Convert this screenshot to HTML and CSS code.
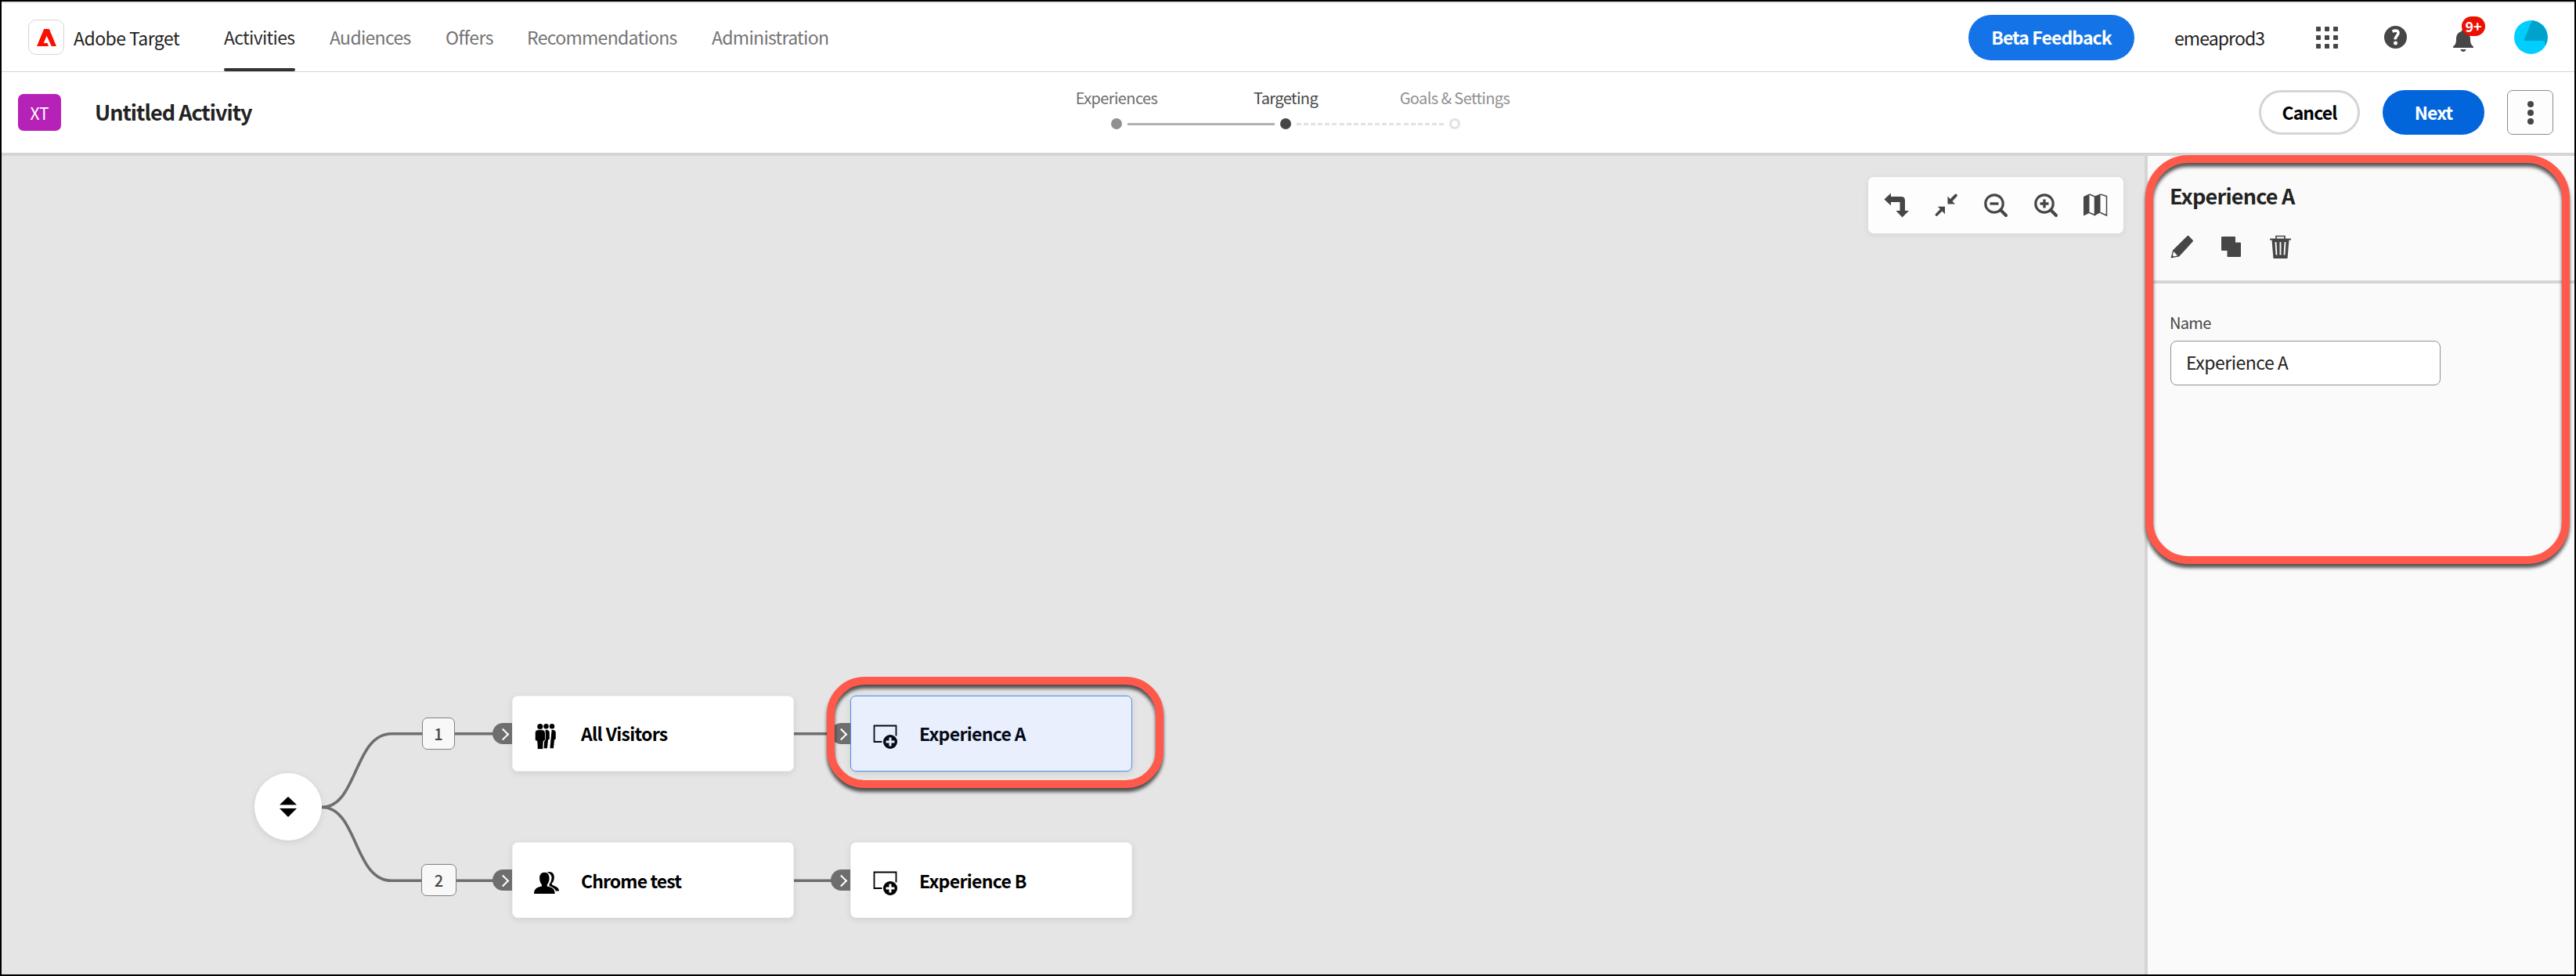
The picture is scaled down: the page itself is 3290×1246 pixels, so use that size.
FILE: index.html
```html
<!DOCTYPE html>
<html lang="en">
<head>
<meta charset="utf-8">
<title>Adobe Target</title>
<link rel="stylesheet" href="styles.css">
</head>
<body>
<div class="app">
  <header class="topbar">
    <div class="logo">
      <svg width="25" height="22" viewBox="0 0 25 22"><path fill="#fa0f00" d="M9.200 0h6.600L25 22h-6.200L12.600 8.800 8.800 18h4.600l1.700 4H0z"/></svg>
    </div>
    <span class="t product">Adobe Target</span>
    <nav class="nav">
      <a class="t nav-item active n1">Activities</a>
      <a class="t nav-item n2">Audiences</a>
      <a class="t nav-item n3">Offers</a>
      <a class="t nav-item n4">Recommendations</a>
      <a class="t nav-item n5">Administration</a>
    </nav>
    <div class="top-actions">
      <button class="btn feedback"><span class="t">Beta Feedback</span></button>
      <span class="t org">emeaprod3</span>
      <svg class="apps" width="28" height="28" viewBox="0 0 28 28" fill="#464646"><rect width="6" height="6" rx="1"/><rect x="11" width="6" height="6" rx="1"/><rect x="22" width="6" height="6" rx="1"/><rect y="11" width="6" height="6" rx="1"/><rect x="11" y="11" width="6" height="6" rx="1"/><rect x="22" y="11" width="6" height="6" rx="1"/><rect y="22" width="6" height="6" rx="1"/><rect x="11" y="22" width="6" height="6" rx="1"/><rect x="22" y="22" width="6" height="6" rx="1"/></svg>
      <svg class="help" width="29" height="29" viewBox="0 0 29 29"><circle cx="14.500" cy="14.500" r="14.500" fill="#464646"/><path d="M10.500 7Q18 4.500 18 9.300c0 3-4 4-3.800 8" fill="none" stroke="#fff" stroke-width="3.600"/><circle cx="14.500" cy="22" r="2.500" fill="#fff"/></svg>
      <div class="bell">
        <svg width="26" height="28" viewBox="0 0 26 28" fill="#464646"><path d="M13 0c1.500 0 2.500 1 2.500 2.300C20 3.500 22 7 22 12c0 5 1 7 4 9.500V23H0v-1.500C3 19 4 17 4 12c0-5 2-8.500 6.500-9.700C10.500 1 11.500 0 13 0zM9.500 25h7c-.6 4-6.400 4-7 0z"/></svg>
        <span class="t badge">9+</span>
      </div>
      <svg class="avatar" width="43" height="43" viewBox="0 0 43 43"><circle cx="21.500" cy="21.500" r="21.500" fill="#00ceff"/><path fill="#00a2cc" d="M23 0.100A21.500 21.500 0 0 1 39.800 32Q39.500 26.200 37 26H12z"/></svg>
    </div>
  </header>

  <div class="subbar">
    <div class="type-badge"><span class="t">XT</span></div>
    <h1 class="t title">Untitled Activity</h1>
    <ol class="steps">
      <li class="step done"><span class="t s1">Experiences</span><i class="dot"></i></li>
      <li class="step current"><span class="t s2">Targeting</span><i class="dot"></i></li>
      <li class="step todo"><span class="t s3">Goals &amp; Settings</span><i class="dot"></i></li>
    </ol>
    <div class="sub-actions">
      <button class="btn cancel"><span class="t">Cancel</span></button>
      <button class="btn next"><span class="t">Next</span></button>
      <button class="more"><i></i><i></i><i></i></button>
    </div>
  </div>

  <div class="body">
    <main class="canvas">
      <div class="toolbar">
        <svg width="32" height="32" viewBox="0 0 32 32" fill="#464646"><path d="M0.500 8.500L9 0.500V5H22q5 0 5 5v13h5l-8.500 8.500L15.500 23h5V12H9v4.500z"/></svg>
        <svg width="32" height="32" viewBox="0 0 32 32" fill="#464646"><path d="M17.500 4.500V14.500H27L23.500 11l6-6.500q.8-1.800-.7-2.800-1-.6-2 .2L20.800 8z"/><path d="M14 27.500V17.800H4.800L8 21l-6 6q-1 1.500.2 2.500 1.200.8 2.200 0L10.500 23.500z"/></svg>
        <svg width="32" height="32" viewBox="0 0 32 32" fill="none" stroke="#464646"><circle cx="14" cy="14" r="11.200" stroke-width="3.200"/><path d="M22 22L29 29" stroke-width="4" stroke-linecap="round"/><path d="M8.500 14h11" stroke-width="3.400"/></svg>
        <svg width="32" height="32" viewBox="0 0 32 32" fill="none" stroke="#464646"><circle cx="14" cy="14" r="11.200" stroke-width="3.200"/><path d="M22 22L29 29" stroke-width="4" stroke-linecap="round"/><path d="M8.500 14h11M14 8.500v11" stroke-width="3.400"/></svg>
        <svg width="32" height="32" viewBox="0 0 32 32"><path fill="#464646" d="M1 5L8.500 1.500V26L1 29.500zM15.500 4.500L22.500 1.500V25.500L15.500 29z"/><path fill="none" stroke="#464646" stroke-width="1.500" d="M8.500 2l7 3v23.500l-7-3M22.500 2L30.500 4.500V29l-8-3.500"/></svg>
      </div>

      <svg class="edges" width="1500" height="400" viewBox="0 840 1500 400" fill="none" stroke="#6e6e6e" stroke-width="3.600"><path d="M411 1030.500C457 1030.500 452 936.700 500 936.700H654"/><path d="M411 1030.500C457 1030.500 452 1124.300 500 1124.300H654"/><path d="M1014 936.700h72M1014 1124.300h72"/></svg>

      <div class="split"><svg width="22" height="26" viewBox="0 0 22 26"><path d="M11 0L22 10.500H0zM0 15H22L11 26z"/></svg></div>
      <span class="chip c1"><span class="t">1</span></span>
      <span class="chip c2"><span class="t">2</span></span>

      <div class="node a1"><i class="port"></i>
        <svg class="nicon" width="32" height="34" viewBox="0 0 32 34"><path stroke="#fff" stroke-width="1.500" d="M22 8h2.500q4 .5 4 4.500v7q0 2.500-1.800 2.500L25.600 33h-6l1-11z"/><circle cx="23" cy="4.300" r="3.200"/><path stroke="#fff" stroke-width="1.500" d="M14 8h2.500q4 .5 4 4.500v7q0 2.500-1.800 2.500L17.600 33h-6l1-11z"/><circle cx="15.500" cy="4.300" r="3.200"/><circle cx="7.800" cy="4.500" r="3.600"/><path stroke="#fff" stroke-width=".8" d="M5.500 8.600h5q4 .4 4 4.500v7.400q0 2.700-2.400 2.700L11.600 33.500H4.400L3.900 23.200q-2.600 0-2.600-2.700v-7.400q0-4.100 4.200-4.500z"/></svg>
        <span class="t">All Visitors</span></div>
      <div class="node b1"><i class="port"></i>
        <svg class="nicon person" width="32" height="30" viewBox="0 0 32 30"><path d="M16.500 1.500Q25-.5 25.800 7.500q0 6-3.300 8.500.3 2 3 2.800Q32 21 32 25.500H28q-1.500-4-8.500-6.500v-2q3.500-5 3-9.500Q22 3.500 16.500 1.500z"/><path stroke="#fff" stroke-width="1.200" paint-order="stroke" d="M13.400 1.800c4.500 0 6.200 3.200 6.200 7.400 0 3.500-1.300 6.200-2.800 8v2.300c6 .8 9.900 3.500 9.900 9.500H0c0-6 4-8.700 9.900-9.500v-2.300c-1.500-1.800-2.800-4.500-2.800-8 0-4.200 1.800-7.400 6.300-7.400z"/></svg>
        <span class="t">Chrome test</span></div>
      <div class="node a2 selected"><i class="port"></i>
        <svg class="nicon exp" width="32" height="32" viewBox="0 0 32 32"><path fill="none" stroke="currentColor" stroke-width="1.800" d="M11.500 22H1.500V1.500h28v13"/><circle cx="22" cy="22" r="9" fill="currentColor"/><path d="M16.500 22h11M22 16.500v11" stroke="#e9effc" stroke-width="3"/></svg>
        <span class="t">Experience A</span></div>
      <div class="node b2"><i class="port"></i>
        <svg class="nicon exp" width="32" height="32" viewBox="0 0 32 32"><path fill="none" stroke="currentColor" stroke-width="1.800" d="M11.500 22H1.500V1.500h28v13"/><circle cx="22" cy="22" r="9" fill="currentColor"/><path d="M16.500 22h11M22 16.500v11" stroke="#fff" stroke-width="3"/></svg>
        <span class="t">Experience B</span></div>
      <div class="callout callout-node"></div>
    </main>

    <aside class="panel">
      <div class="panel-head">
        <h2 class="t">Experience A</h2>
        <div class="panel-tools">
          <svg width="30" height="30" viewBox="0 0 30 30"><path fill="#464646" d="M21.500 1.200q1-1 2 0L28.500 6.500q.8 1 0 2L11 27.500 0.500 29.500 3 19.500z"/><path fill="#fafafa" d="M4 21l5 5.300-4.500 1.200-1.700-1.700z"/></svg>
          <svg width="30" height="30" viewBox="0 0 30 30"><path fill="#464646" d="M3 2h16q1 0 1 1v6.500h6q1 0 1 1V27q0 1-1 1H10.500q-1 0-1-1v-7H3q-1 0-1-1V3q0-1 1-1z"/></svg>
          <svg width="30" height="30" viewBox="0 0 30 30"><path fill="#464646" d="M1 4.500h27V6.500H25.500L23.500 30H5.500L3.500 6.500H1z"/><path fill="none" stroke="#464646" stroke-width="1.700" d="M9 5V1.500h11V5"/><path stroke="#fafafa" stroke-width="1.900" d="M8.500 9l1 16.500M14.500 9v16.500M20.500 9l-1 16.500"/></svg>
        </div>
      </div>
      <div class="panel-form">
        <label class="t">Name</label>
        <div class="field"><span class="t">Experience A</span></div>
      </div>
      <div class="callout callout-panel"></div>
    </aside>
  </div>
</div>
</body>
</html>
```
FILE: styles.css
```css
* { box-sizing: border-box; }
body { margin: 0; font-family: "Noto Sans CJK SC", "Noto Sans", sans-serif; color: #222; }
svg { display: block; flex: none; }
button { font: inherit; padding: 0; background: none; border: 0; }
.t { white-space: nowrap; font-size: 23px; line-height: 36px; font-weight: 400; letter-spacing: -0.7px; }

.app { width: 3290px; height: 1246px; border: 2px solid #000; display: flex; flex-direction: column; background: #fff; overflow: hidden; }

.topbar { height: 90px; flex: none; border-top: 2px solid #e5e5e5; border-bottom: 1px solid #d5d5d5; display: flex; align-items: center; padding-left: 34px; position: relative; }
.logo { width: 46px; height: 45px; border: 1px solid #d5d5d5; border-radius: 10px; display: flex; align-items: center; justify-content: center; }
.product { margin-left: 12px; width: 192px; letter-spacing: -0.55px; }
.nav { display: flex; height: 87px; }
.nav-item { color: #747474; padding-top: 25px; height: 87px; }
.nav-item.active { color: #2c2c2c; position: relative; }
.nav-item.active::after { content: ""; position: absolute; left: 0; right: 0; bottom: 0; height: 4px; border-radius: 2px; background: #323232; }
.n1 { width: 91px; margin-right: 44px; }
.n2 { width: 104px; margin-right: 44px; }
.n3 { width: 61px; margin-right: 43px; letter-spacing: -0.5px; }
.n4 { width: 192px; margin-right: 44px; }

.top-actions { margin-left: auto; display: flex; align-items: center; height: 87px; padding-right: 34px; }
.btn { border-radius: 29px; display: flex; align-items: center; justify-content: center; }
.btn .t { font-weight: 700; letter-spacing: -0.9px; position: relative; top: -1px; }
.feedback { width: 212px; height: 58px; background: #1473e6; color: #fff; }
.org { margin-left: 51px; width: 181px; letter-spacing: -0.9px; }
.help { margin-left: 59px; }
.bell { margin-left: 59px; width: 78px; position: relative; padding-top: 10px; }
.t.badge { position: absolute; left: 11px; top: -8px; width: 30px; height: 25px; border-radius: 13px; background: #eb1000; color: #fff; font-size: 18px; line-height: 25px; font-weight: 700; text-align: center; letter-spacing: 0; }
.bell > svg { position: relative; top: -1px; }

.subbar { height: 107px; flex: none; border-bottom: 4px solid #d5d5d5; display: flex; align-items: center; padding-left: 21px; position: relative; }
.type-badge { width: 55px; height: 47px; border-radius: 7px; background: #b622b7; color: #fff; display: flex; align-items: center; justify-content: center; }
.type-badge .t { font-size: 21px; letter-spacing: 0; }
.title { margin: -2px 0 0 43px; font-size: 27px; font-weight: 700; width: 1197px; letter-spacing: -1px; }
.steps { list-style: none; margin: 0; padding: 0; display: flex; align-self: flex-start; }
.step { width: 216px; height: 74px; padding-top: 15px; display: flex; flex-direction: column; align-items: center; position: relative; color: #6e6e6e; }
.step .t { font-size: 20px; height: 44px; letter-spacing: -0.6px; }
.step.current { color: #464646; }
.step.todo { color: #909090; }
.dot { width: 14px; height: 14px; border-radius: 50%; background: #909090; }
.current .dot { background: #464646; }
.todo .dot { background: #fff; border: 3px solid #e1e1e1; }
.step.done::after { content: ""; position: absolute; left: 122px; top: 65px; width: 188px; height: 3px; background: #b1b1b1; }
.step.current::after { content: ""; position: absolute; left: 122px; top: 65px; width: 189px; height: 3px; background: repeating-linear-gradient(90deg, #e1e1e1 0 6px, transparent 6px 9.1px); }
.sub-actions { margin-left: auto; display: flex; padding-right: 27px; }
.cancel { width: 129px; height: 57px; border: 3px solid #d5d5d5; }
.next { width: 130px; height: 57px; margin-left: 29px; background: #0265dc; color: #fff; }
.more { width: 59px; height: 57px; margin-left: 29px; border: 1px solid #8c8c8c; border-radius: 7px; background: #fdfdfd; display: flex; flex-direction: column; align-items: center; justify-content: center; gap: 3px; }
.more i { width: 8px; height: 8px; border-radius: 50%; background: #464646; }

.body { flex: 1; display: flex; }
.canvas { flex: 1; background: #e5e5e5; position: relative; overflow: hidden; }
.toolbar { width: 326px; height: 72px; margin: 27px 27px 0 auto; border-radius: 7px; background: #fdfdfd; box-shadow: 0 2px 8px rgba(0,0,0,.08); display: flex; align-items: center; justify-content: space-between; padding: 0 20px; }
.edges { position: absolute; left: -2px; top: 641px; }
.split { position: absolute; left: 323px; top: 788px; width: 86px; height: 86px; border-radius: 50%; background: #fff; box-shadow: 0 2px 8px rgba(0,0,0,.1); display: flex; align-items: center; justify-content: center; }
.chip { position: absolute; height: 41px; border: 1px solid #808080; border-radius: 7px; background: #f8f8f8; color: #464646; display: flex; align-items: center; justify-content: center; }
.chip .t { font-size: 20px; font-weight: 500; letter-spacing: 0; }
.c1 { left: 537px; top: 717px; width: 42px; }
.c2 { left: 536px; top: 904px; width: 45px; }
.node { position: absolute; width: 360px; height: 97px; border-radius: 7px; border: 1px solid #f0f0f0; background: #fff; box-shadow: 0 2px 8px rgba(0,0,0,.1); color: #000; display: flex; align-items: center; padding-left: 27px; }
.node .t { font-weight: 700; position: absolute; left: 87px; top: 29px; }
.a1 { left: 652px; top: 689px; }
.b1 { left: 652px; top: 876px; }
.b1 .t { letter-spacing: -0.9px; top: 30px; }
.a2 { left: 1084px; top: 689px; }
.b2 { left: 1084px; top: 876px; }
.b2 .t { top: 30px; }
.selected { background: #e9effc; border-color: #4b8ff0; color: #040a1a; }
.nicon { margin-top: 6px; }
.nicon.exp { margin-left: 1px; margin-top: 8px; }
.port { position: absolute; left: -26px; top: 34px; width: 25px; height: 27px; border-radius: 14px 0 0 14px; background: #6e6e6e; }
.port::after { content: ""; position: absolute; left: 8px; top: 9px; width: 9px; height: 9px; border: solid #fff; border-width: 2.500px 2.500px 0 0; transform: rotate(45deg); }

.callout { position: absolute; border: 10px solid #ff594b; filter: drop-shadow(0 5px 2px rgba(0,0,0,.65)); pointer-events: none; }
.callout-node { left: 1054px; top: 665px; width: 430px; height: 142px; border-radius: 48px; }
.callout-panel { left: -3px; top: -1px; width: 542px; height: 522px; border-radius: 55px; }

.panel { width: 549px; border-left: 4px solid #d5d5d5; background: #fafafa; position: relative; }
.panel-head { height: 163px; border-bottom: 4px solid #d5d5d5; padding: 33px 0 0 28px; }
.panel-head h2 { margin: 0; font-size: 27px; font-weight: 700; letter-spacing: -0.8px; }
.panel-tools { display: flex; gap: 33px; margin: 32px 0 0 1px; }
.panel-form { padding: 32px 0 0 29px; display: flex; flex-direction: column; }
.panel-form label { font-size: 20px; color: #464646; height: 41px; margin-left: -1px; }
.field { width: 345px; height: 57px; border: 1px solid #909090; border-radius: 8px; background: #fff; padding: 8px 0 0 19px; }
.field .t { letter-spacing: -0.5px; }
```
